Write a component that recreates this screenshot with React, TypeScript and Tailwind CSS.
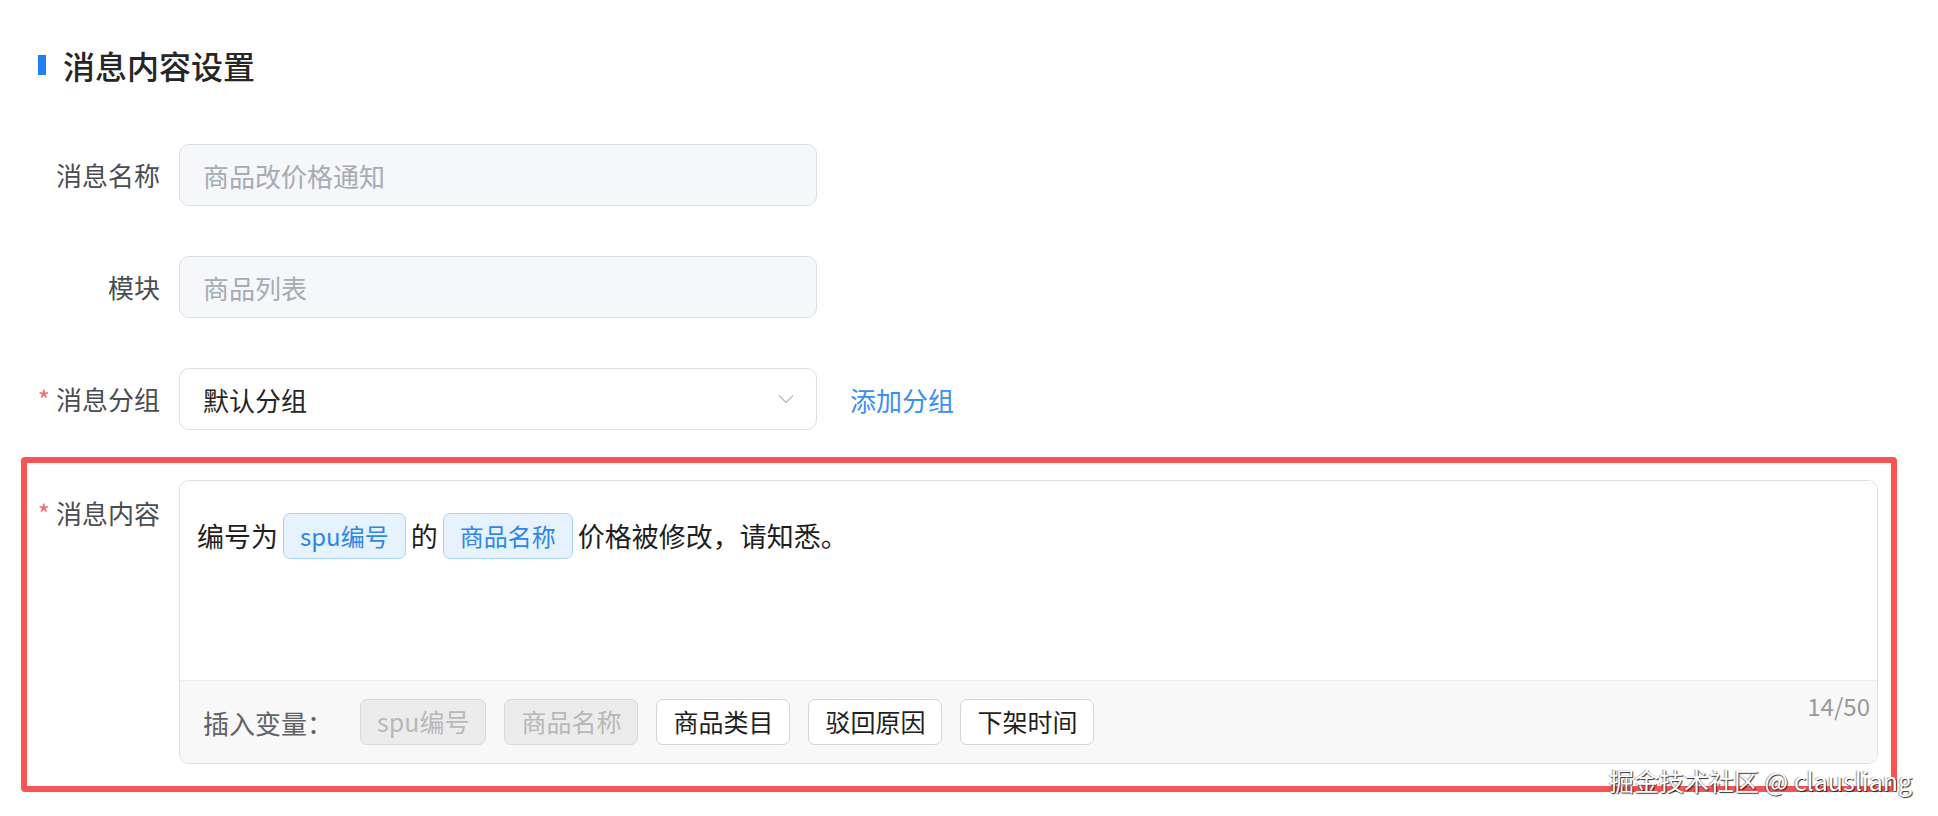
import React from "react";

const labelCls = "w-[160px] shrink-0 text-right text-[26px] leading-[40px] text-[#4a4d52]";

function Label({ text, required }: { text: string; required?: boolean }) {
  return (
    <div className={labelCls}>
      {required && <span className="mr-[6px] text-[#f56c6c]">*</span>}
      {text}
    </div>
  );
}

function VarTag({ text }: { text: string }) {
  return (
    <span className="mx-[5px] inline-flex h-[46px] items-center rounded-[7px] border border-[#a8d3fb] bg-[#e6f3ff] px-[16px] text-[24px] text-[#2f86e8]">
      {text}
    </span>
  );
}

function VarButton({ text, disabled }: { text: string; disabled?: boolean }) {
  return (
    <button
      disabled={disabled}
      className={
        disabled
          ? "flex h-[46px] items-center rounded-[7px] border border-[#d9d9d9] bg-[#ececec] px-[16px] text-[25px] text-[#b8b8b8]"
          : "flex h-[46px] items-center rounded-[7px] border border-[#d4d4d4] bg-white px-[16px] text-[25px] text-[#1f1f1f]"
      }
    >
      {text}
    </button>
  );
}

export default function App() {
  const buttons = [
    { text: "spu编号", disabled: true },
    { text: "商品名称", disabled: true },
    { text: "商品类目" },
    { text: "驳回原因" },
    { text: "下架时间" },
  ];

  return (
    <div
      className="relative h-[816px] w-full overflow-hidden bg-white"
      style={{ fontFamily: '"Noto Sans CJK SC", "Noto Sans", sans-serif' }}
    >
      {/* 标题 */}
      <div className="flex h-[40px] items-center pl-[38px] mt-[45px]">
        <div className="h-[20px] w-[8px] bg-[#1e80f0]" />
        <h1 className="ml-[17px] text-[32px] font-medium leading-[40px] text-[#262626]">
          消息内容设置
        </h1>
      </div>

      <div className="mt-[59px] flex flex-col gap-[50px]">
        {/* 消息名称 */}
        <div className="flex h-[62px] items-center gap-[19px]">
          <Label text="消息名称" />
          <div className="flex h-[62px] w-[638px] items-center rounded-[10px] border border-[#dcdfe6] bg-[#f5f7fa] px-[23px] text-[26px] text-[#a8abb2]">
            商品改价格通知
          </div>
        </div>

        {/* 模块 */}
        <div className="flex h-[62px] items-center gap-[19px]">
          <Label text="模块" />
          <div className="flex h-[62px] w-[638px] items-center rounded-[10px] border border-[#dcdfe6] bg-[#f5f7fa] px-[23px] text-[26px] text-[#a8abb2]">
            商品列表
          </div>
        </div>

        {/* 消息分组 */}
        <div className="flex h-[62px] items-center gap-[19px]">
          <Label text="消息分组" required />
          <div className="flex h-[62px] w-[638px] items-center justify-between rounded-[10px] border border-[#dcdfe6] bg-white pl-[23px] pr-[22px] text-[26px] text-[#262626]">
            <span>默认分组</span>
            <svg width="16" height="10" viewBox="0 0 16 10" fill="none">
              <path d="M1 1.5 L8 8.5 L15 1.5" stroke="#b8bcc4" strokeWidth="1.3" />
            </svg>
          </div>
          <a className="ml-[14px] text-[26px] text-[#3b8fef]">添加分组</a>
        </div>

        {/* 消息内容 */}
        <div className="relative flex items-start gap-[19px]">
          <div className="pt-[13px]">
            <Label text="消息内容" required />
          </div>
          <div className="mr-[60px] flex h-[284px] flex-1 flex-col overflow-hidden rounded-[10px] border border-[#dcdfe6]">
            <div className="flex-1 bg-white pl-[17px] pt-[32px]">
              <div className="flex h-[46px] items-center text-[27px] text-[#1f1f1f]">
                <span>编号为</span>
                <VarTag text="spu编号" />
                <span>的</span>
                <VarTag text="商品名称" />
                <span>价格被修改，请知悉。</span>
              </div>
            </div>
            <div className="relative flex h-[83px] items-center border-t border-[#ececec] bg-[#f8f8f8] pl-[23px]">
              <span className="mr-[27px] text-[26px] text-[#606266]">插入变量：</span>
              <div className="flex items-center gap-[18px]">
                {buttons.map((b) => (
                  <VarButton key={b.text} text={b.text} disabled={b.disabled} />
                ))}
              </div>
              <span className="absolute right-[7px] top-[9px] text-[24px] leading-[32px] text-[#9a9a9a]">
                14/50
              </span>
            </div>
          </div>

          {/* 标注框 */}
          <div className="pointer-events-none absolute bottom-[-28px] left-[21px] right-[41px] top-[-23px] rounded-[4px] border-[6px] border-[#f95454]" />
        </div>

        {/* 下一行（被截断） */}
        <div className="-mt-[15px] flex h-[62px] items-center gap-[19px]">
          <Label text="接收对象" required />
        </div>
      </div>

      {/* 水印 */}
      <div className="absolute left-[1609px] top-[763px] whitespace-nowrap text-[25px] leading-[34px] text-white [text-shadow:1px_1px_1px_rgba(0,0,0,0.8),-1px_0_1px_rgba(0,0,0,0.4)]">
        掘金技术社区 @ clausliang
      </div>
    </div>
  );
}
